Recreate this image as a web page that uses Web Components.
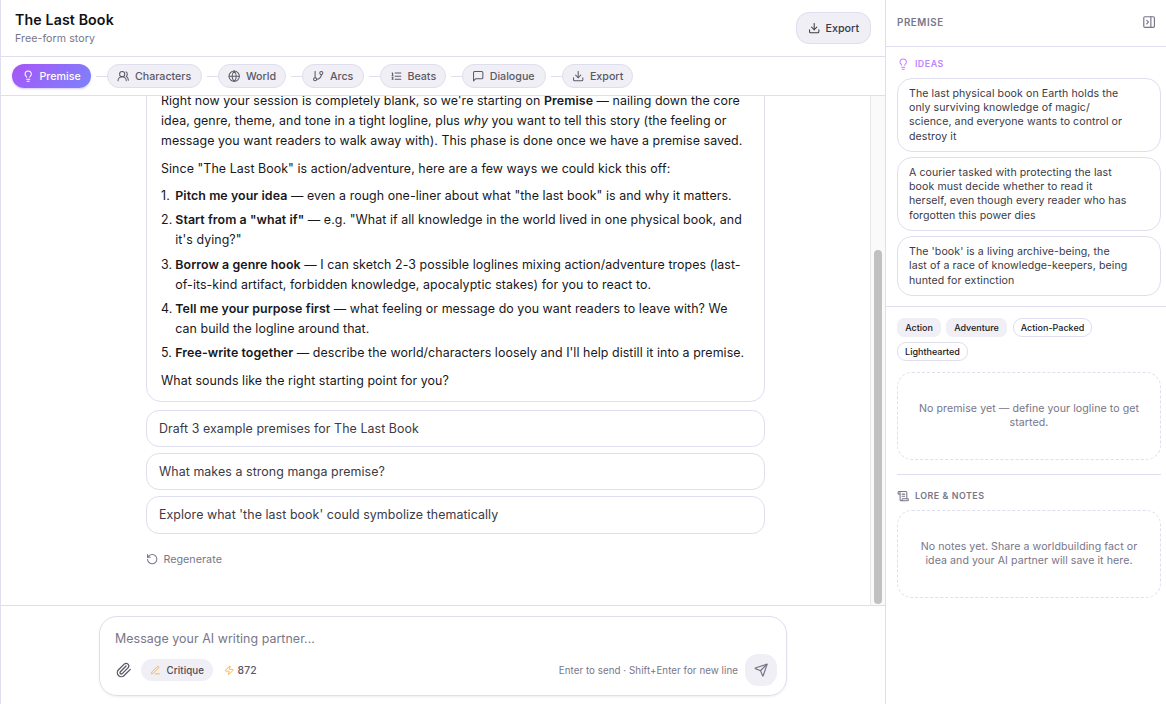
<!DOCTYPE html>
<html lang="en">
<head>
<meta charset="utf-8">
<title>The Last Book</title>
<style>
    body {
        margin: 0;
        background: #fff;
        color: #17171c;
        font-family: Inter, "Liberation Sans", sans-serif;
        --line: #dfdeee;
        --soft: #f0eff6;
        --muted: #787688;
    }
</style>
</head>
<body>
<story-app></story-app>

<script>
// Stroke icons on a 24px grid
const ICONS = {
    bulb: `<path d="M15 14c.2-1 .7-1.7 1.5-2.5 1-.9 1.5-2.2 1.5-3.5A6 6 0 0 0 6 8c0 1 .2 2.2 1.5 3.5.7.7 1.3 1.5 1.5 2.5"/><path d="M9 18h6"/><path d="M10 22h4"/>`,
    users: `<path d="M18 21a8 8 0 0 0-16 0"/><circle cx="10" cy="8" r="5"/><path d="M22 20c0-3.37-2-6.5-4-8a5 5 0 0 0-.45-8.3"/>`,
    globe: `<circle cx="12" cy="12" r="10"/><path d="M12 2a14.5 14.5 0 0 0 0 20 14.5 14.5 0 0 0 0-20"/><path d="M2 12h20"/>`,
    branch: `<path d="M6 3v12"/><circle cx="18" cy="6" r="3"/><circle cx="6" cy="18" r="3"/><path d="M18 9a9 9 0 0 1-9 9"/>`,
    list: `<path d="M10 12h11"/><path d="M10 18h11"/><path d="M10 6h11"/><path d="M4 10h2"/><path d="M4 6h1v4"/><path d="M6 18H4c0-1 2-2 2-3s-1-1.5-2-1"/>`,
    message: `<path d="M21 15a2 2 0 0 1-2 2H7l-4 4V5a2 2 0 0 1 2-2h14a2 2 0 0 1 2 2z"/>`,
    download: `<path d="M21 15v4a2 2 0 0 1-2 2H5a2 2 0 0 1-2-2v-4"/><path d="m7 10 5 5 5-5"/><path d="M12 15V3"/>`,
    panel: `<rect x="3" y="3" width="18" height="18" rx="2"/><path d="M15 3v18"/><path d="m8 9 3 3-3 3"/>`,
    scroll: `<path d="M15 12h-5"/><path d="M15 8h-5"/><path d="M19 17V5a2 2 0 0 0-2-2H4"/><path d="M8 21h12a2 2 0 0 0 2-2v-1a1 1 0 0 0-1-1H11a1 1 0 0 0-1 1v1a2 2 0 1 1-4 0V5a2 2 0 1 0-4 0v2a1 1 0 0 0 1 1h3"/>`,
    rotate: `<path d="M3 12a9 9 0 1 0 9-9 9.75 9.75 0 0 0-6.74 2.74L3 8"/><path d="M3 3v5h5"/>`,
    clip: `<path d="m21.44 11.05-9.19 9.19a6 6 0 0 1-8.49-8.49l8.57-8.57A4 4 0 1 1 18 8.84l-8.59 8.57a2 2 0 0 1-2.83-2.83l8.49-8.48"/>`,
    pen: `<path d="M12 20h9"/><path d="M16.376 3.622a1 1 0 0 1 3.002 3.002L7.368 18.635a2 2 0 0 1-.855.506l-2.872.838a.5.5 0 0 1-.62-.62l.838-2.872a2 2 0 0 1 .506-.854z"/>`,
    zap: `<path d="M4 14a1 1 0 0 1-.78-1.63l9.9-10.2a.5.5 0 0 1 .86.46l-1.92 6.02A1 1 0 0 0 13 10h7a1 1 0 0 1 .78 1.63l-9.9 10.2a.5.5 0 0 1-.86-.46l1.92-6.02A1 1 0 0 0 11 14z"/>`,
    send: `<path d="M14.536 21.686a.5.5 0 0 0 .937-.024l6.5-19a.496.496 0 0 0-.635-.635l-19 6.5a.5.5 0 0 0-.024.937l7.93 3.18a2 2 0 0 1 1.112 1.11z"/><path d="m21.854 2.147-10.94 10.939"/>`
};

// Shared base: puts the element's template() into its shadow root
class StoryElement extends HTMLElement {
    constructor() {
        super();
        this.attachShadow({ mode: "open" });
    }

    connectedCallback() {
        this.shadowRoot.innerHTML = this.template();
    }
}

// <story-icon name="bulb" size="12">
class StoryIcon extends StoryElement {
    template() {
        const size = this.getAttribute("size") || 12;
        return `
        <style>
            :host { display: block; flex: none; }
            svg { display: block; fill: none; stroke: currentColor; stroke-width: 2; stroke-linecap: round; stroke-linejoin: round; }
        </style>
        <svg width="${size}" height="${size}" viewBox="0 0 24 24">${ICONS[this.getAttribute("name")]}</svg>
        `;
    }
}

// Title bar with the export button
class StoryHeader extends StoryElement {
    template() {
        return `
        <style>
            :host { display: flex; align-items: center; justify-content: space-between; box-sizing: border-box; height: 57px; padding: 0 14px; border-bottom: 1px solid var(--line); }
            h1 { margin: 0; font-size: 14.2px; line-height: 20px; font-weight: 600; letter-spacing: .12px; color: #111114; }
            p { margin: 1px 0 0; font-size: 10.6px; line-height: 16px; letter-spacing: .08px; color: var(--muted); }
            button { display: flex; align-items: center; gap: 5px; box-sizing: border-box; width: 75px; height: 32px; padding: 0 0 0 11px; border: 1px solid var(--line); border-radius: 13px; background: var(--soft); color: #3b3a45; font: 500 10.8px Inter, "Liberation Sans", sans-serif; }
        </style>
        <div>
            <h1>The Last Book</h1>
            <p>Free-form story</p>
        </div>
        <button><story-icon name="download" size="12.4"></story-icon>Export</button>
        `;
    }
}

// One phase pill; every pill but the first has a connector before it
class PhaseStep extends StoryElement {
    template() {
        return `
        <style>
            :host { display: flex; align-items: center; }
            :host(:not([active]))::before { content: ""; width: 11px; height: 1px; margin-left: 5px; background: var(--line); }
            div { display: flex; align-items: center; gap: 5.5px; box-sizing: border-box; width: var(--w); height: 24px; padding-left: 9px; border: 1px solid var(--line); border-radius: 12px; background: var(--soft); color: #5b5966; font-size: 10.7px; font-weight: 500; white-space: nowrap; }
            :host([active]) div { padding-left: 10px; gap: 5px; border: 0; background: linear-gradient(135deg, #a855f7, #7c83fb); color: #fff; box-shadow: 0 1px 2px rgba(120, 90, 240, .3); }
        </style>
        <div><story-icon name="${this.getAttribute("icon")}" size="12.4"></story-icon><slot></slot></div>
        `;
    }
}

class PhaseBar extends StoryElement {
    template() {
        return `
        <style>
            :host { display: flex; align-items: center; box-sizing: border-box; height: 39px; padding-left: 11px; border-bottom: 1px solid var(--line); }
        </style>
        <phase-step active icon="bulb" style="--w: 79px">Premise</phase-step>
        <phase-step icon="users" style="--w: 95px">Characters</phase-step>
        <phase-step icon="globe" style="--w: 68px">World</phase-step>
        <phase-step icon="branch" style="--w: 61.5px">Arcs</phase-step>
        <phase-step icon="list" style="--w: 66.3px">Beats</phase-step>
        <phase-step icon="message" style="--w: 84.2px">Dialogue</phase-step>
        <phase-step icon="download" style="--w: 71px">Export</phase-step>
        `;
    }
}

// Assistant message bubble
class ChatMessage extends StoryElement {
    template() {
        return `
        <style>
            :host { display: block; box-sizing: border-box; padding: 11px 14px 10px; border: 1px solid var(--line); border-radius: 15px; font-size: 12.4px; line-height: 20.15px; letter-spacing: .072px; white-space: nowrap; }
            p { margin: 0 0 7.4px; }
            p:last-child { margin: 7.6px 0 0; }
            ol { margin: 0; padding: 0; list-style: none; counter-reset: step; }
            li { display: flex; counter-increment: step; }
            li + li { margin-top: 3.9px; }
            li::before { content: counter(step) "."; flex: none; width: 14.3px; }
            b { font-weight: 600; }
        </style>
        <p>Right now your session is completely blank, so we're starting on <b>Premise</b> — nailing down the core<br>idea, genre, theme, and tone in a tight logline, plus <em>why</em> you want to tell this story (the feeling or<br>message you want readers to walk away with). This phase is done once we have a premise saved.</p>
        <p>Since "The Last Book" is action/adventure, here are a few ways we could kick this off:</p>
        <ol>
            <li><span><b>Pitch me your idea</b> — even a rough one-liner about what "the last book" is and why it matters.</span></li>
            <li><span><b>Start from a "what if"</b> — e.g. "What if all knowledge in the world lived in one physical book, and<br>it's dying?"</span></li>
            <li><span><b>Borrow a genre hook</b> — I can sketch 2-3 possible loglines mixing action/adventure tropes (last-<br>of-its-kind artifact, forbidden knowledge, apocalyptic stakes) for you to react to.</span></li>
            <li><span><b>Tell me your purpose first</b> — what feeling or message do you want readers to leave with? We<br>can build the logline around that.</span></li>
            <li><span><b>Free-write together</b> — describe the world/characters loosely and I'll help distill it into a premise.</span></li>
        </ol>
        <p>What sounds like the right starting point for you?</p>
        `;
    }
}

class ChatSuggestion extends StoryElement {
    template() {
        return `
        <style>
            :host { display: flex; align-items: center; box-sizing: border-box; height: 37.5px; padding: 0 12px; border: 1px solid var(--line); border-radius: 13px; color: #3b3a45; font-size: 12.4px; letter-spacing: .075px; }
        </style>
        <slot></slot>
        `;
    }
}

// Scrolled to the end, so the newest message sits at the bottom
class ChatLog extends StoryElement {
    template() {
        return `
        <style>
            :host { display: flex; flex: 1; min-height: 0; overflow: hidden; }
            .feed { display: flex; flex: 1; flex-direction: column; justify-content: flex-end; box-sizing: border-box; padding: 0 105px 36px 145px; }
            .suggestions { display: flex; flex-direction: column; gap: 5.6px; margin-top: 8px; }
            .again { display: flex; align-items: center; gap: 5px; height: 20px; margin: 19.5px 0 3px; color: var(--muted); font-size: 10.7px; letter-spacing: .06px; }
            .track { display: flex; align-items: flex-end; justify-content: center; box-sizing: border-box; width: 15px; border-left: 1px solid #e8e8e8; background: #fafafa; }
            .thumb { width: 8px; height: 354px; margin-bottom: 1px; border-radius: 4px; background: #c1c1c1; }
        </style>
        <div class="feed">
            <chat-message></chat-message>
            <div class="suggestions">
                <chat-suggestion>Draft 3 example premises for The Last Book</chat-suggestion>
                <chat-suggestion>What makes a strong manga premise?</chat-suggestion>
                <chat-suggestion>Explore what 'the last book' could symbolize thematically</chat-suggestion>
            </div>
            <div class="again"><story-icon name="rotate" size="12.4"></story-icon><span>Regenerate</span></div>
        </div>
        <div class="track"><div class="thumb"></div></div>
        `;
    }
}

class ChatComposer extends StoryElement {
    template() {
        return `
        <style>
            :host { display: block; box-sizing: border-box; height: 99px; padding: 10px 98px 0; border-top: 1px solid var(--line); }
            .box { box-sizing: border-box; height: 80px; padding: 11px 9px 0 15px; border: 1px solid var(--line); border-radius: 18px; box-shadow: 0 1px 2px rgba(40, 30, 90, .08); }
            .hint { height: 22px; font-size: 12.4px; line-height: 22px; letter-spacing: .06px; color: var(--muted); }
            .row { display: flex; align-items: center; height: 32px; margin-top: 4px; font-size: 9.75px; letter-spacing: .055px; }
            .clip { margin-left: 1px; color: #5b5966; }
            .mode { display: flex; align-items: center; gap: 6px; box-sizing: border-box; width: 72px; height: 22px; margin-left: 9px; padding-left: 9px; border-radius: 11px; background: var(--soft); color: #4c4a57; font-weight: 500; }
            .credits { display: flex; align-items: center; gap: 3px; margin-left: 11px; color: #5b5966; font-size: 10.4px; font-weight: 500; }
            .mode story-icon, .credits story-icon { color: #ffb02e; }
            .keys { margin-left: auto; color: var(--muted); }
            .send { display: grid; place-items: center; width: 32px; height: 32px; margin-left: 7px; border-radius: 13px; background: var(--soft); color: #757386; }
        </style>
        <div class="box">
            <div class="hint">Message your AI writing partner...</div>
            <div class="row">
                <story-icon class="clip" name="clip" size="16"></story-icon>
                <div class="mode"><story-icon name="pen" size="10.6"></story-icon><span>Critique</span></div>
                <div class="credits"><story-icon name="zap" size="10.6"></story-icon><span>872</span></div>
                <span class="keys">Enter to send · Shift+Enter for new line</span>
                <div class="send"><story-icon name="send" size="14.2"></story-icon></div>
            </div>
        </div>
        `;
    }
}

class IdeaCard extends StoryElement {
    template() {
        return `
        <style>
            :host { display: block; box-sizing: border-box; padding: 7.5px 11px 7px; border: 1px solid var(--line); border-radius: 15px; color: #3b3a45; font-size: 10.6px; line-height: 14.4px; letter-spacing: .08px; white-space: nowrap; }
        </style>
        <slot></slot>
        `;
    }
}

class GenreTag extends StoryElement {
    template() {
        return `
        <style>
            :host { display: flex; align-items: center; justify-content: center; box-sizing: border-box; width: var(--w); height: 19px; border: 1px solid var(--line); border-radius: 9px; color: #17171c; font-size: 9px; font-weight: 500; white-space: nowrap; }
            :host([filled]) { border-color: var(--soft); border-radius: 7px; background: var(--soft); }
        </style>
        <slot></slot>
        `;
    }
}

// Dashed placeholder for a section with nothing in it
class EmptyNote extends StoryElement {
    template() {
        return `
        <style>
            :host { display: flex; align-items: center; justify-content: center; box-sizing: border-box; height: 88.5px; border: 1px dashed var(--line); border-radius: 15px; color: var(--muted); font-size: 10.6px; line-height: 14.2px; letter-spacing: .07px; text-align: center; white-space: nowrap; }
        </style>
        <div><slot></slot></div>
        `;
    }
}

class PremisePanel extends StoryElement {
    template() {
        return `
        <style>
            :host { display: flex; flex-direction: column; box-sizing: border-box; width: 281px; border-left: 1px solid var(--line); color: var(--muted); }
            h2, h3 { margin: 0; font-size: 9.75px; font-weight: 600; letter-spacing: .6px; }
            h3 { display: flex; align-items: center; gap: 5.5px; font-size: 8.9px; line-height: 14px; letter-spacing: .52px; }
            header { display: flex; align-items: center; justify-content: space-between; box-sizing: border-box; height: 47px; padding: 0 10px 2px 11px; border-bottom: 1px solid var(--line); }
            .ideas { display: flex; flex-direction: column; gap: 5px; box-sizing: border-box; height: 260px; padding: 9px 5px 0 11px; border-bottom: 1px solid var(--line); }
            .ideas h3 { height: 16px; margin-bottom: 1px; color: #c084fc; }
            .detail { padding: 11px 5px 0 11px; }
            .tags { display: flex; flex-wrap: wrap; gap: 5.4px 5px; margin-bottom: 10.6px; }
            .tags genre-tag:nth-child(3) { margin-left: 1px; }
            .lore { margin-top: 13.5px; padding-top: 14px; border-top: 1px solid var(--line); }
            .lore h3 { margin-bottom: 7px; }
        </style>
        <header><h2>PREMISE</h2><story-icon name="panel" size="14.2"></story-icon></header>
        <section class="ideas">
            <h3><story-icon name="bulb" size="12.4"></story-icon><span>IDEAS</span></h3>
            <idea-card>The last physical book on Earth holds the<br>only surviving knowledge of magic/<br>science, and everyone wants to control or<br>destroy it</idea-card>
            <idea-card>A courier tasked with protecting the last<br>book must decide whether to read it<br>herself, even though every reader who has<br>forgotten this power dies</idea-card>
            <idea-card>The 'book' is a living archive-being, the<br>last of a race of knowledge-keepers, being<br>hunted for extinction</idea-card>
        </section>
        <section class="detail">
            <div class="tags">
                <genre-tag filled style="--w: 44px">Action</genre-tag>
                <genre-tag filled style="--w: 61px">Adventure</genre-tag>
                <genre-tag style="--w: 79px">Action-Packed</genre-tag>
                <genre-tag style="--w: 71px">Lighthearted</genre-tag>
            </div>
            <empty-note>No premise yet — define your logline to get<br>started.</empty-note>
            <div class="lore">
                <h3><story-icon name="scroll" size="12.4"></story-icon><span>LORE &amp; NOTES</span></h3>
                <empty-note>No notes yet. Share a worldbuilding fact or<br>idea and your AI partner will save it here.</empty-note>
            </div>
        </section>
        `;
    }
}

class StoryApp extends StoryElement {
    template() {
        return `
        <style>
            :host { display: flex; width: 1166px; height: 704px; overflow: hidden; }
            main { display: flex; flex: 1; flex-direction: column; min-width: 0; box-sizing: border-box; border-left: 1px solid var(--line); }
        </style>
        <main>
            <story-header></story-header>
            <phase-bar></phase-bar>
            <chat-log></chat-log>
            <chat-composer></chat-composer>
        </main>
        <premise-panel></premise-panel>
        `;
    }
}

customElements.define("story-icon", StoryIcon);
customElements.define("story-header", StoryHeader);
customElements.define("phase-step", PhaseStep);
customElements.define("phase-bar", PhaseBar);
customElements.define("chat-message", ChatMessage);
customElements.define("chat-suggestion", ChatSuggestion);
customElements.define("chat-log", ChatLog);
customElements.define("chat-composer", ChatComposer);
customElements.define("idea-card", IdeaCard);
customElements.define("genre-tag", GenreTag);
customElements.define("empty-note", EmptyNote);
customElements.define("premise-panel", PremisePanel);
customElements.define("story-app", StoryApp);
</script>
</body>
</html>
